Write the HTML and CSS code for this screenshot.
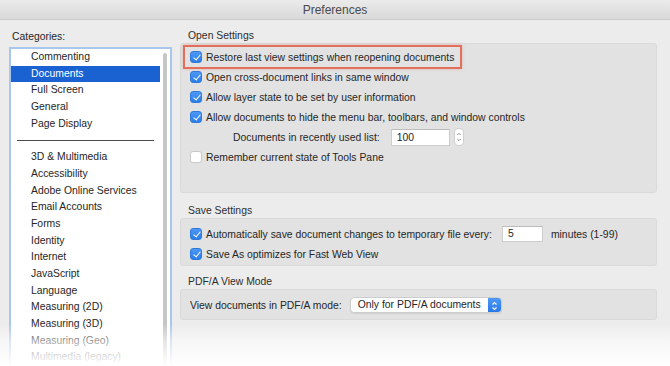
FILE: index.html
```html
<!DOCTYPE html>
<html lang="en">
<head>
  <meta charset="UTF-8" />
  <title>Preferences</title>
  <link rel="stylesheet" href="styles.css">
</head>
<body>
  <div class="window">
    <div class="titlebar">Preferences</div>

    <div class="content">
      <div class="sidebar">
        <div class="label">Categories:</div>
        <div class="list">
          <ul class="items">
            <li>Commenting</li>
            <li class="selected">Documents</li>
            <li>Full Screen</li>
            <li>General</li>
            <li>Page Display</li>
            <li class="sep"><span></span></li>
            <li>3D &amp; Multimedia</li>
            <li>Accessibility</li>
            <li>Adobe Online Services</li>
            <li>Email Accounts</li>
            <li>Forms</li>
            <li>Identity</li>
            <li>Internet</li>
            <li>JavaScript</li>
            <li>Language</li>
            <li>Measuring (2D)</li>
            <li>Measuring (3D)</li>
            <li>Measuring (Geo)</li>
            <li>Multimedia (legacy)</li>
          </ul>
          <div class="scroll"><div class="thumb"></div></div>
        </div>
      </div>

      <div class="main">
        <div class="section-title first">Open Settings</div>
        <div class="group open">
          <div class="row highlight"><span class="cb on"></span>Restore last view settings when reopening documents</div>
          <div class="row"><span class="cb on"></span>Open cross-document links in same window</div>
          <div class="row"><span class="cb on"></span>Allow layer state to be set by user information</div>
          <div class="row"><span class="cb on"></span>Allow documents to hide the menu bar, toolbars, and window controls</div>
          <div class="row indent">
            Documents in recently used list:
            <span class="field wide">100</span>
            <span class="stepper">
              <svg width="10" height="18" viewBox="0 0 10 18"><path d="M3 6.5 5 4.5 7 6.5M3 11.5 5 13.5 7 11.5" fill="none" stroke="#6d6d6d" stroke-width="1"/></svg>
            </span>
          </div>
          <div class="row"><span class="cb"></span>Remember current state of Tools Pane</div>
        </div>

        <div class="section-title">Save Settings</div>
        <div class="group save">
          <div class="row"><span class="cb on"></span>Automatically save document changes to temporary file every:
            <span class="field small">5</span>
            <span class="unit">minutes (1-99)</span>
          </div>
          <div class="row"><span class="cb on"></span>Save As optimizes for Fast Web View</div>
        </div>

        <div class="section-title pdfa">PDF/A View Mode</div>
        <div class="group mode">
          <div class="row">
            View documents in PDF/A mode:
            <span class="select">
              <span class="value">Only for PDF/A documents</span>
              <span class="arrows">
                <svg width="13" height="16" viewBox="0 0 13 16"><path d="M4.5 6.5 6.5 4.5 8.5 6.5M4.5 9.5 6.5 11.5 8.5 9.5" fill="none" stroke="#fff" stroke-width="1.2"/></svg>
              </span>
            </span>
          </div>
        </div>
      </div>
    </div>

    <div class="fade"></div>
  </div>
</body>
</html>
```

FILE: styles.css
```css
* {
  box-sizing: border-box;
  margin: 0;
  padding: 0;
}
body {
  width: 670px;
  height: 366px;
  overflow: hidden;
  background: #ececec;
  font-family: 'Liberation Sans', Arial, sans-serif;
  font-size: 10.4px;
  color: #262626;
}
.window {
  position: relative;
  height: 366px;
  display: flex;
  flex-direction: column;
}
.titlebar {
  height: 20px;
  line-height: 20px;
  text-align: center;
  font-size: 12px;
  color: #4a4a4a;
  background: linear-gradient(#ebebeb, #d9d9d9);
  border-bottom: 1px solid #cbcbcb;
}
.content {
  flex: 1;
  display: flex;
  gap: 8px;
  padding: 9px 13px 0 9px;
  min-height: 0;
}

/* sidebar */
.sidebar {
  width: 163px;
  display: flex;
  flex-direction: column;
}
.label {
  line-height: 14px;
  padding: 1px 0 0 3px;
  margin-bottom: 3px;
}
.list {
  flex: 1;
  display: flex;
  background: #fff;
  border: 2px solid #a8c6ee;
  border-bottom: none;
  overflow: hidden;
}
.items {
  flex: 1;
  list-style: none;
}
.items li {
  height: 16.7px;
  line-height: 16.7px;
  padding-left: 20px;
  white-space: nowrap;
}
.items li.selected {
  background: #1a62d2;
  color: #fff;
}
.items li.sep {
  display: flex;
  align-items: center;
  padding: 0 6px 0 6px;
}
.items li.sep span {
  flex: 1;
  height: 1px;
  background: #4a4a4a;
}
.scroll {
  width: 10px;
  padding: 4px 3px 0 3px;
}
.thumb {
  height: 100%;
  border-radius: 2px 2px 0 0;
  background: #c6c6c6;
}

/* main panel */
.main {
  flex: 1;
}
.section-title {
  line-height: 14px;
  padding: 11px 0 0 8px;
  height: 25px;
  color: #2e2e2e;
}
.section-title.first {
  padding-top: 0;
  height: 14px;
}
.section-title.pdfa {
  padding-top: 9px;
  height: 23px;
}
.group {
  background: #e2e2e2;
  border: 1px solid #dadada;
  border-radius: 3px;
}
.group.open {
  padding: 3px 0 25px;
}
.group.save {
  padding: 5px 0 1px;
}
.group.mode {
  padding: 5px 0 4px;
}
.row {
  height: 20px;
  display: flex;
  align-items: center;
  padding-left: 9px;
  white-space: nowrap;
}
.row.highlight {
  width: fit-content;
  margin-left: 4px;
  padding: 0 6px 0 5px;
  outline: 2px solid #e26f5c;
  box-shadow: 0 0 3px 2px rgba(226, 111, 92, 0.35);
}
.row.indent {
  padding-left: 52px;
}
.cb {
  width: 12px;
  height: 12px;
  margin-right: 4px;
  border-radius: 3px;
  background: #fff;
  border: 1px solid #c9c9c9;
  position: relative;
  flex: none;
}
.cb.on {
  background: linear-gradient(#4d98f6, #2a7de9);
  border-color: #2f7ad9;
}
.cb.on::after {
  content: "";
  position: absolute;
  left: 3.5px;
  top: 1px;
  width: 3px;
  height: 6px;
  border: solid #fff;
  border-width: 0 1.6px 1.6px 0;
  transform: rotate(40deg);
}
.field {
  height: 17px;
  line-height: 15px;
  background: #fff;
  border: 1px solid #cdcdcd;
  border-top-color: #bcbcbc;
  padding-left: 5px;
}
.field.wide {
  width: 59px;
  margin-left: 11px;
}
.field.small {
  width: 41px;
  height: 16px;
  line-height: 14px;
  margin-left: 10px;
}
.stepper {
  margin-left: 4px;
  width: 10px;
  height: 18px;
  background: #fff;
  border: 1px solid #cfcfcf;
  border-radius: 4px;
  display: flex;
  align-items: center;
  justify-content: center;
}
.stepper svg {
  display: block;
}
.unit {
  margin-left: 8px;
}
.select {
  margin-left: 8px;
  width: 152px;
  height: 16px;
  display: flex;
  background: #fff;
  border: 1px solid #cdcdcd;
  border-radius: 4px;
  overflow: hidden;
  box-shadow: 0 1px 1px rgba(0, 0, 0, 0.08);
}
.select .value {
  flex: 1;
  line-height: 14px;
  padding-left: 7px;
}
.select .arrows {
  width: 13px;
  background: linear-gradient(#4f9af7, #2778e8);
  display: flex;
}
.fade {
  position: absolute;
  left: 0;
  right: 0;
  bottom: 0;
  height: 42px;
  background: linear-gradient(rgba(255, 255, 255, 0), rgba(255, 255, 255, 0.55) 40%, #fff 100%);
  pointer-events: none;
}
```
